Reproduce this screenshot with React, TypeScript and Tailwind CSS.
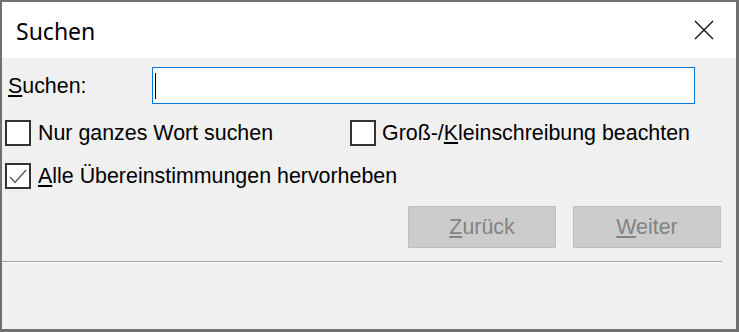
import React from "react";

const body = { fontFamily: '"Liberation Sans", Arial, sans-serif' } as React.CSSProperties;

function Box({ checked }: { checked?: boolean }) {
  return (
    <div className="w-[26px] h-[26px] border-2 border-[#333333] bg-white shrink-0 relative">
      {checked && (
        <svg width="22" height="22" viewBox="0 0 22 22" className="absolute left-0 top-0">
          <polyline points="3,12 8,17.5 19,5" fill="none" stroke="#555555" strokeWidth="1.3" />
        </svg>
      )}
    </div>
  );
}

export default function App() {
  return (
    <div className="w-[739px] h-[332px] border-t-2 border-l-2 border-r-[3px] border-b-[3px] border-[#707070] bg-[#f0f0f0] flex flex-col" style={body}>
      <div className="h-[56px] bg-white flex items-center justify-between pl-[14px] pr-[22px] shrink-0">
        <span className="text-[23px] text-black leading-none pt-[2px]" style={{ fontFamily: '"Segoe UI", "Noto Sans", "Open Sans", sans-serif' }}>
          Suchen
        </span>
        <svg width="20" height="20" viewBox="0 0 20 20">
          <path d="M1 1 L19 19 M19 1 L1 19" stroke="#111111" strokeWidth="1.4" fill="none" />
        </svg>
      </div>
      <div className="flex flex-col text-[21.4px] text-black leading-none">
        <div className="flex items-center mt-[9px] h-[37px]">
          <span className="w-[150px] pl-[6px] pt-[2px]"><u className="underline-offset-2">S</u>uchen:</span>
          <div className="w-[543px] h-[37px] border border-[#0078d7] bg-white flex items-center pl-[2px]">
            <div className="w-[1px] h-[26px] bg-black" />
          </div>
        </div>
        <div className="flex items-center mt-[16px] h-[26px]">
          <div className="flex items-center gap-[7px] pl-[3px] w-[348px]">
            <Box />
            <span className="pt-[1px]">Nur <u className="underline-offset-2">g</u>anzes Wort suchen</span>
          </div>
          <div className="flex items-center gap-[6px]">
            <Box />
            <span className="pt-[1px]">Groß-/<u className="underline-offset-2">K</u>leinschreibung beachten</span>
          </div>
        </div>
        <div className="flex items-center mt-[17px] h-[26px] pl-[3px] gap-[7px]">
          <Box checked />
          <span className="pt-[1px]"><u className="underline-offset-2">A</u>lle Übereinstimmungen hervorheben</span>
        </div>
        <div className="flex justify-end gap-[17px] mt-[17px] pr-[15px]">
          <div className="w-[148px] h-[42px] bg-[#cccccc] border border-[#bfbfbf] flex items-center justify-center text-[#838383]">
            <span className="pt-[1px]"><u className="underline-offset-2">Z</u>urück</span>
          </div>
          <div className="w-[148px] h-[42px] bg-[#cccccc] border border-[#bfbfbf] flex items-center justify-center text-[#838383]">
            <span className="pt-[1px]"><u className="underline-offset-2">W</u>eiter</span>
          </div>
        </div>
        <div className="mt-[13px] w-[720px] h-[1px] bg-[#a0a0a0]" />
        <div className="w-[720px] h-[1px] bg-white" />
      </div>
    </div>
  );
}
